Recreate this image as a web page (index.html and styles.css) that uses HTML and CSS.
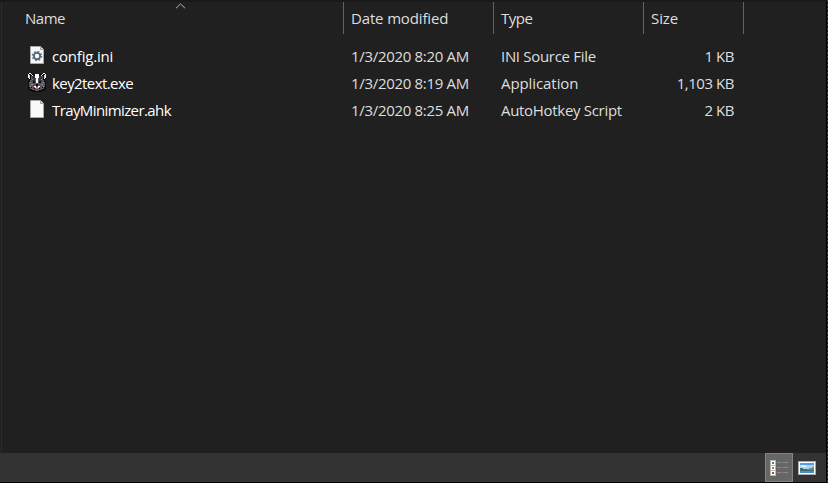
FILE: index.html
```html
<!DOCTYPE html>
<html lang="en">
<head>
<meta charset="utf-8">
<title>Files</title>
<link rel="stylesheet" href="styles.css">
</head>
<body>
<div class="window">
  <main class="pane">
    <div class="header">
      <div class="col name"><span>Name</span>
        <svg class="sort" width="11" height="6" viewBox="0 0 11 6"><path d="M1 5.2 5.5 1 10 5.2"/></svg>
      </div>
      <div class="col date"><span>Date modified</span></div>
      <div class="col type"><span>Type</span></div>
      <div class="col size"><span>Size</span></div>
    </div>
    <div class="rows">
      <div class="row">
        <svg class="icon" width="20" height="20" viewBox="0 0 20 20">
          <path d="M3.5 1.5h10l3 3v14h-13z" fill="#f8f9fa" stroke="#a7a7a7"/><path d="M13.5 1.5v3h3" fill="#eee" stroke="#999"/>
          <circle cx="10" cy="11" r="3.2" fill="none" stroke="#566a76" stroke-width="2"/>
          <circle cx="10" cy="11" r="4.6" fill="none" stroke="#6b7f89" stroke-width="1.4" stroke-dasharray="1.8 1.81"/>
        </svg>
        <span class="file f-ini">config.ini</span><span class="date">1/3/2020 8:20 AM</span><span class="type">INI Source File</span><span class="size">1 KB</span>
      </div>
      <div class="row">
        <svg class="icon" width="20" height="20" viewBox="0 0 20 20" shape-rendering="crispEdges">
          <path d="M1 1h4v1h2v1h1V2h4v1h1V2h2V1h4v6h-1v2h1v8h-1v2h-3v1H5v-1H2v-2H1V9h1V7H1z" fill="#0c0b0e"/>
          <path d="M4 4h12v4h1v2h1v5h-1v2h-2v1h-3v1H8v-1H5v-1H3v-2H2v-5h1V8h1z" fill="#58565d"/>
          <path d="M5 4h3v5H5zM12 4h3v5h-3z" fill="#39373f"/>
          <path d="M1 2h1v4H1zM2 1h2v1H2zM4 2h1v1H4zM5 3h1v1H5zM18 2h1v4h-1zM16 1h2v1h-2zM15 2h1v1h-1zM14 3h1v1h-1zM2 6h1v1H2zM17 6h1v1h-1z" fill="#f4f2f5"/>
          <path d="M2 3h1v3H2zM17 3h1v3h-1z" fill="#c9c7cc"/>
          <path d="M8 2h4v4h-1v5H9V6H8zM7 14h2v1H7zM11 14h2v1h-2zM8 15h1v1H8zM11 15h1v1h-1z" fill="#fff"/>
          <path d="M6 9h2v2H6zM12 9h2v2h-2zM9 12h2v2H9zM7 16h1v1H7zM12 16h1v1h-1zM4 15h1v1H4zM15 15h1v1h-1z" fill="#0d0c10"/>
          <path d="M9 15h2v2H9z" fill="#e75b70"/>
          <path d="M3 10h1v1H3zM16 10h1v1h-1zM4 12h2v1H4zM14 12h2v1h-2zM3 14h1v1H3zM16 14h1v1h-1zM5 7h1v1H5zM14 7h1v1h-1z" fill="#8d8b92"/>
        </svg>
        <span class="file f-exe">key2text.exe</span><span class="date">1/3/2020 8:19 AM</span><span class="type t-app">Application</span><span class="size">1,103 KB</span>
      </div>
      <div class="row">
        <svg class="icon" width="20" height="20" viewBox="0 0 20 20">
          <path d="M3.5 1.5h10l3 3v14h-13z" fill="#f8f9fa" stroke="#a7a7a7"/><path d="M13.5 1.5v3h3" fill="#eee" stroke="#999"/>
        </svg>
        <span class="file f-ahk">TrayMinimizer.ahk</span><span class="date">1/3/2020 8:25 AM</span><span class="type">AutoHotkey Script</span><span class="size">2 KB</span>
      </div>
    </div>
  </main>
  <footer class="status">
    <button class="view active" aria-label="Details">
      <svg width="18" height="16" viewBox="0 0 18 16" shape-rendering="crispEdges">
        <path d="M0 0h6v16H0z" fill="#b8b8b8"/><path d="M1 1h4v4H1zM1 6h4v4H1zM1 11h4v4H1z" fill="#fff"/>
        <path d="M2 2h2v2H2z" fill="#3c8790"/><path d="M2 7h2v2H2z" fill="#83943c"/><path d="M2 12h2v2H2z" fill="#b2442e"/>
        <path d="M7 2h5v1H7zM13 2h5v1h-5zM7 7h5v1H7zM13 7h5v1h-5zM7 12h5v1H7zM13 12h5v1h-5z" fill="#898989"/>
      </svg>
    </button>
    <button class="view" aria-label="Thumbnails">
      <svg width="18" height="14" viewBox="0 0 18 14" shape-rendering="crispEdges">
        <path d="M0 0h18v14H0z" fill="#aaa"/><path d="M1 1h16v12H1z" fill="#fff"/>
        <path d="M2 2h14v3H2z" fill="#5a9be6"/><path d="M2 4h14v4H2z" fill="#a8d4f4"/><path d="M3 4h4v1h2v1H3z" fill="#dceffb"/>
        <path d="M2 7h3v1h4v1h7v1H2z" fill="#3d6e68"/><path d="M16 6h-2v1h-3v1H9v1h7z" fill="#5f9186"/><path d="M2 10h14v2H2z" fill="#4a8cc8"/>
      </svg>
    </button>
  </footer>
</div>
</body>
</html>
```
FILE: styles.css
```css
* { box-sizing: border-box; }
body {
  margin: 0;
  background: repeating-linear-gradient(#444 0 2px, #161616 2px 4px);
}
.window {
  width: 827px; height: 483px;
  display: flex; flex-direction: column;
  background: #202020; color: #dedede;
  border-top: 2px solid #191919;
  border-right: 1px solid #000;
  border-bottom: 1px solid #000;
  font: 15px/27px "Open Sans", sans-serif;
  white-space: nowrap;
}
.pane { flex: 1; border-left: 1px solid #2b2b2b; margin-left: 1px; }
.header { display: flex; height: 32px; line-height: 33px; }
.col { position: relative; border-right: 1px solid #636363; padding-left: 7px; }
.col.name { width: 342px; padding-left: 23px; letter-spacing: -0.5px; }
.col.date, .col.type { width: 150px; letter-spacing: -0.15px; }
.col.type { letter-spacing: -0.5px; }
.col.size { width: 100px; letter-spacing: -0.1px; }
.sort { position: absolute; left: 173px; top: 1px; fill: none; stroke: #b5b5b5; }
.rows { padding-top: 9px; }
.row { display: flex; height: 27px; padding-left: 25px; }
.icon { margin: 2px 5px 0 0; }
.row .file { width: 299px; color: #fff; }
.row .f-ini { letter-spacing: -0.2px; }
.row .f-exe { letter-spacing: -0.58px; }
.row .f-ahk { letter-spacing: -0.6px; }
.row .date, .row .type { width: 150px; letter-spacing: -0.31px; }
.row .t-app { letter-spacing: -0.08px; }
.row .size { width: 83px; text-align: right; letter-spacing: -0.45px; }
.status {
  height: 29px; background: #333;
  display: flex; justify-content: flex-end; padding-right: 5px;
}
.view {
  width: 28px; height: 29px; padding: 0; border: 0; background: none;
  display: flex; align-items: center; justify-content: center;
}
.view.active { background: #666; border: 1px solid #838383; }
```
